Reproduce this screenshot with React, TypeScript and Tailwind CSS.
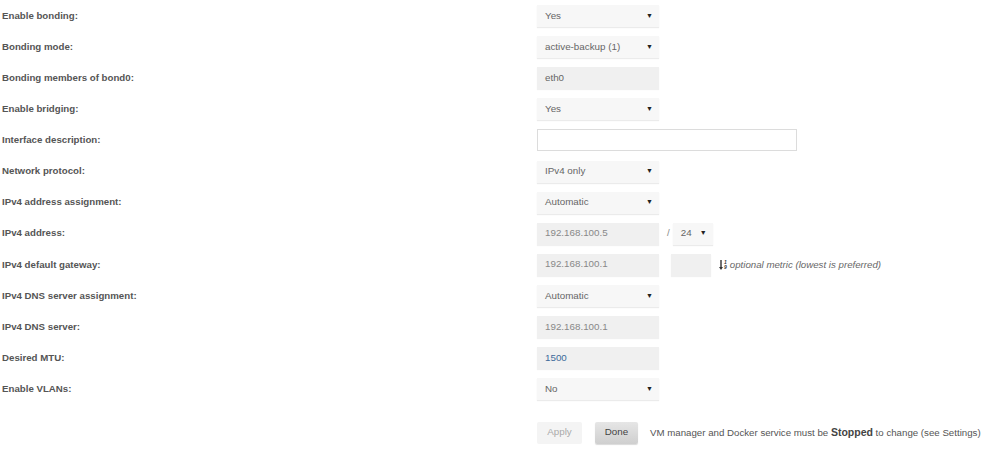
import React from 'react';

const font = { fontFamily: '"Liberation Sans", Arial, sans-serif' };

const Select: React.FC<{ value: string; w?: string }> = ({ value, w = 'w-[122px]' }) => (
  <div
    className={`${w} h-[22px] flex items-center justify-between pl-[8px] pr-[6px] bg-[#f7f7f7] text-[9.8px] text-[#666] shadow-[0_1px_1px_rgba(0,0,0,0.08)]`}
  >
    <span>{value}</span>
    <span className="text-[7px] text-[#222]">▼</span>
  </div>
);

const Field: React.FC<{ value?: string; w?: string; tone?: string }> = ({ value = '', w = 'w-[122px]', tone = 'text-[#888]' }) => (
  <div
    className={`${w} h-[22px] flex items-center pl-[8px] bg-[#f0f0f0] text-[9.8px] ${tone} shadow-[0_1px_1px_rgba(0,0,0,0.06)]`}
  >
    {value}
  </div>
);

const SortIcon = () => (
  <span className="inline-flex items-end mr-[3px] text-[#333]">
    <svg width="4" height="10" viewBox="0 0 4 10">
      <path d="M1.3 0h1.4v7H4L2 10 0 7h1.3z" fill="#333" />
    </svg>
    <span className="flex flex-col leading-[5px] text-[5px] font-bold ml-[1px]">
      <span>1</span>
      <span>9</span>
    </span>
  </span>
);

const rows: { label: string; control: React.ReactNode }[] = [
  { label: 'Enable bonding:', control: <Select value="Yes" /> },
  { label: 'Bonding mode:', control: <Select value="active-backup (1)" /> },
  { label: 'Bonding members of bond0:', control: <Field value="eth0" tone="text-[#666]" /> },
  { label: 'Enable bridging:', control: <Select value="Yes" /> },
  {
    label: 'Interface description:',
    control: <div className="w-[260px] h-[22px] bg-white border border-[#dcdcdc]" />,
  },
  { label: 'Network protocol:', control: <Select value="IPv4 only" /> },
  { label: 'IPv4 address assignment:', control: <Select value="Automatic" /> },
  {
    label: 'IPv4 address:',
    control: (
      <div className="flex items-center">
        <Field value="192.168.100.5" />
        <span className="ml-[8px] mr-[3px] text-[9.8px] text-[#888]">/</span>
        <Select value="24" w="w-[40px]" />
      </div>
    ),
  },
  {
    label: 'IPv4 default gateway:',
    control: (
      <div className="flex items-center">
        <Field value="192.168.100.1" />
        <div className="ml-[12px]">
          <Field w="w-[40px]" />
        </div>
        <span className="ml-[8px] flex items-center text-[9.7px] italic text-[#666]">
          <SortIcon />
          optional metric (lowest is preferred)
        </span>
      </div>
    ),
  },
  { label: 'IPv4 DNS server assignment:', control: <Select value="Automatic" /> },
  { label: 'IPv4 DNS server:', control: <Field value="192.168.100.1" /> },
  { label: 'Desired MTU:', control: <Field value="1500" tone="text-[#3d6a9a]" /> },
  { label: 'Enable VLANs:', control: <Select value="No" /> },
];

export default function App() {
  return (
    <div className="w-[1000px] h-[452px] bg-white overflow-hidden" style={font}>
      <div className="flex flex-col pt-[0.5px]">
        {rows.map((r, i) => (
          <div key={i} className="flex items-center h-[31.1px]">
            <div className="w-[537px] pl-[2px] text-[9.7px] font-bold text-[#555]">{r.label}</div>
            {r.control}
          </div>
        ))}
      </div>
      <div className="flex items-center mt-[17px] ml-[537px]">
        <div className="w-[45px] h-[22px] flex items-center justify-center rounded-[2px] bg-[#f4f4f4] text-[9.8px] text-[#aaa]">
          Apply
        </div>
        <div className="ml-[13px] w-[43px] h-[22px] flex items-center justify-center rounded-[2px] bg-gradient-to-b from-[#e6e6e6] to-[#cfcfcf] text-[9.8px] text-[#444] shadow-[0_1px_1px_rgba(0,0,0,0.15)]">
          Done
        </div>
        <div className="ml-[12px] text-[9.7px] text-[#555]">
          VM manager and Docker service must be <b className="text-[10.5px] text-[#444]">Stopped</b> to change (see Settings)
        </div>
      </div>
    </div>
  );
}
